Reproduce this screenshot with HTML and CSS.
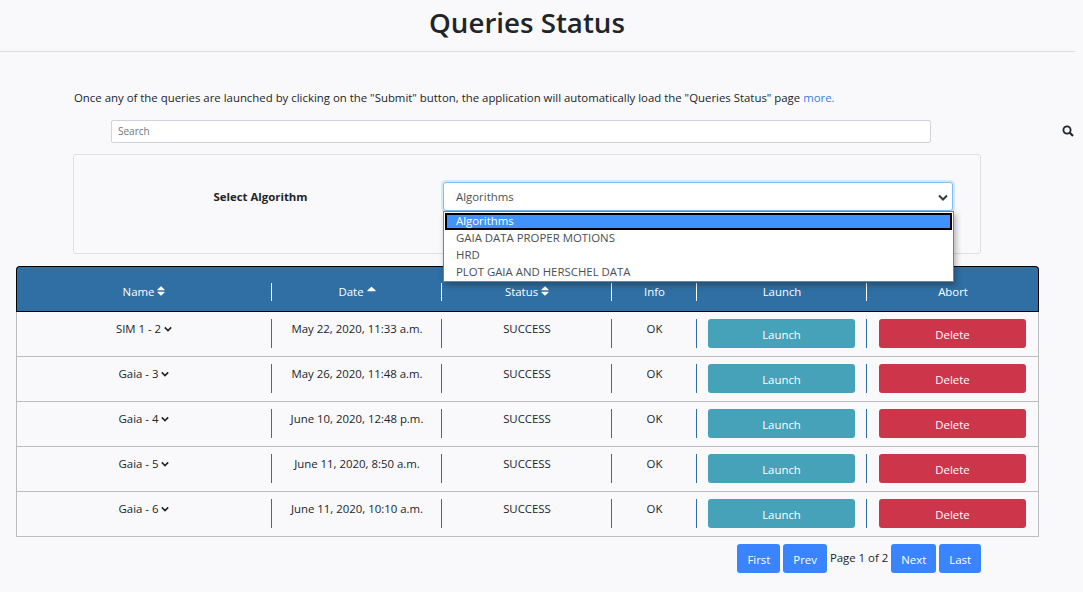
FILE: index.html
```html
<!DOCTYPE html>
<html lang="en">
<head>
  <meta charset="UTF-8" />
  <title>Queries Status</title>
  <link rel="stylesheet" href="styles.css">
</head>
<body>
  <svg width="0" height="0" class="defs">
    <symbol id="sort" viewBox="0 0 10 12"><path d="M1 5h8a.6.6 0 0 0 .4-1L5.4.3a.6.6 0 0 0-.8 0L.6 4A.6.6 0 0 0 1 5zM9 7H1a.6.6 0 0 0-.4 1l4 3.7c.2.2.6.2.8 0l4-3.7A.6.6 0 0 0 9 7z"/></symbol>
    <symbol id="sort-up" viewBox="0 0 10 6"><path d="M1 5.500h8a.6.6 0 0 0 .4-1L5.400.7a.6.6 0 0 0-.8 0L.6 4.500a.6.6 0 0 0 .4 1z"/></symbol>
    <symbol id="chev" viewBox="0 0 10 7"><path d="M1 1.500 5 5.500l4-4" fill="none" stroke="currentColor" stroke-width="2"/></symbol>
  </svg>

  <header class="page-head"><h1>Queries Status</h1></header>

  <p class="intro">Once any of the queries are launched by clicking on the "Submit" button, the application will automatically load the "Queries Status" page <a href="#">more.</a></p>

  <div class="search-row">
    <input type="text" class="search" placeholder="Search">
    <svg class="search-icon" viewBox="0 0 12 12" width="12" height="12"><circle cx="5" cy="5" r="3.600" fill="none" stroke="currentColor" stroke-width="1.800"/><path d="M7.800 7.800 11 11" stroke="currentColor" stroke-width="2.200"/></svg>
  </div>

  <section class="algo-panel">
    <label class="algo-label">Select Algorithm</label>
    <div class="algo-select">
      <div class="select-box">Algorithms
        <svg class="select-chev" width="10" height="7"><use href="#chev"/></svg>
      </div>
      <ul class="select-list">
        <li class="selected">Algorithms</li>
        <li>GAIA DATA PROPER MOTIONS</li>
        <li>HRD</li>
        <li>PLOT GAIA AND HERSCHEL DATA</li>
      </ul>
    </div>
  </section>

  <table class="queries">
    <colgroup>
      <col class="c-name"><col class="c-date"><col class="c-status"><col class="c-info"><col class="c-launch"><col class="c-abort">
    </colgroup>
    <thead>
      <tr>
        <th><div>Name <svg class="ic-sort"><use href="#sort"/></svg></div></th>
        <th><div>Date <svg class="ic-up"><use href="#sort-up"/></svg></div></th>
        <th><div>Status <svg class="ic-sort"><use href="#sort"/></svg></div></th>
        <th><div>Info</div></th>
        <th><div>Launch</div></th>
        <th><div>Abort</div></th>
      </tr>
    </thead>
    <tbody>
      <tr>
        <td><div>SIM 1 - 2 <svg class="ic-chev"><use href="#chev"/></svg></div></td>
        <td><div>May 22, 2020, 11:33 a.m.</div></td>
        <td><div>SUCCESS</div></td>
        <td><div>OK</div></td>
        <td><div class="btn-cell"><button class="btn teal">Launch</button></div></td>
        <td><div class="btn-cell"><button class="btn red">Delete</button></div></td>
      </tr>
      <tr>
        <td><div>Gaia - 3 <svg class="ic-chev"><use href="#chev"/></svg></div></td>
        <td><div>May 26, 2020, 11:48 a.m.</div></td>
        <td><div>SUCCESS</div></td>
        <td><div>OK</div></td>
        <td><div class="btn-cell"><button class="btn teal">Launch</button></div></td>
        <td><div class="btn-cell"><button class="btn red">Delete</button></div></td>
      </tr>
      <tr>
        <td><div>Gaia - 4 <svg class="ic-chev"><use href="#chev"/></svg></div></td>
        <td><div>June 10, 2020, 12:48 p.m.</div></td>
        <td><div>SUCCESS</div></td>
        <td><div>OK</div></td>
        <td><div class="btn-cell"><button class="btn teal">Launch</button></div></td>
        <td><div class="btn-cell"><button class="btn red">Delete</button></div></td>
      </tr>
      <tr>
        <td><div>Gaia - 5 <svg class="ic-chev"><use href="#chev"/></svg></div></td>
        <td><div>June 11, 2020, 8:50 a.m.</div></td>
        <td><div>SUCCESS</div></td>
        <td><div>OK</div></td>
        <td><div class="btn-cell"><button class="btn teal">Launch</button></div></td>
        <td><div class="btn-cell"><button class="btn red">Delete</button></div></td>
      </tr>
      <tr>
        <td><div>Gaia - 6 <svg class="ic-chev"><use href="#chev"/></svg></div></td>
        <td><div>June 11, 2020, 10:10 a.m.</div></td>
        <td><div>SUCCESS</div></td>
        <td><div>OK</div></td>
        <td><div class="btn-cell"><button class="btn teal">Launch</button></div></td>
        <td><div class="btn-cell"><button class="btn red">Delete</button></div></td>
      </tr>
    </tbody>
  </table>

  <nav class="pager">
    <button class="btn blue">First</button>
    <button class="btn blue">Prev</button>
    <span class="pager-text">Page 1 of 2</span>
    <button class="btn blue">Next</button>
    <button class="btn blue">Last</button>
  </nav>
</body>
</html>
```

FILE: styles.css
```css
* {
  box-sizing: border-box;
}
html, body {
  height: 100%;
}
body {
  margin: 0;
  background: #f9f9fb;
  color: #212529;
  font-family: "Open Sans", sans-serif;
  font-size: 11.4px;
  overflow: hidden;
}
.defs {
  position: absolute;
}
.page-head {
  width: 1075px;
  height: 52px;
  border-bottom: 1px solid #dcdcdf;
  text-align: center;
}
.page-head h1 {
  margin: 0;
  padding-right: 21px;
  font-size: 27.7px;
  font-weight: 600;
  line-height: 44px;
}
.intro {
  margin: 37px 0 0 74px;
  line-height: 17px;
}
.intro a {
  color: #3a7cd8;
  text-decoration: none;
}
.search-row {
  display: flex;
  align-items: flex-start;
  margin: 14px 0 0 111px;
}
.search {
  width: 820px;
  height: 23px;
  padding: 0 6px 2px;
  border: 1px solid #ced4da;
  border-radius: 2px;
  background: #fff;
  font: 10px "Open Sans", sans-serif;
}
.search::placeholder {
  color: #6c757d;
}
.search-icon {
  margin: 5px 0 0 131px;
  color: #212529;
}
.algo-panel {
  display: flex;
  width: 908px;
  height: 100px;
  margin: 11px 0 0 73px;
  padding-top: 27px;
  border: 1px solid #e0e0e3;
  border-radius: 3px;
}
.algo-label {
  width: 369px;
  padding-left: 4px;
  font-weight: 700;
  line-height: 30px;
  text-align: center;
}
.algo-select {
  position: relative;
  width: 510px;
}
.select-box {
  position: relative;
  height: 29px;
  padding-left: 12px;
  border: 1px solid #80bdff;
  border-radius: 3px;
  background: #fff;
  box-shadow: 0 0 0 2px rgba(128, 189, 255, .3);
  color: #495057;
  line-height: 28px;
}
.select-chev {
  position: absolute;
  top: 11px;
  right: 4px;
  color: #343a40;
}
.select-list {
  position: absolute;
  top: 29px;
  left: 0;
  z-index: 5;
  width: 511px;
  margin: 0;
  padding: 1px 1px 0;
  border: 1px solid #808080;
  background: #fff;
  box-shadow: 2px 3px 6px rgba(0, 0, 0, .3);
  color: #495057;
  list-style: none;
}
.select-list li {
  height: 17px;
  padding-left: 11px;
  line-height: 15px;
}
.select-list .selected {
  outline: 2px solid #000;
  outline-offset: -2px;
  background: #3f92ff;
  color: #fff;
}
.queries {
  width: 1023px;
  margin: 12px 0 0 16px;
  border-collapse: separate;
  border-spacing: 0;
  table-layout: fixed;
}
.c-name { width: 255px; }
.c-date { width: 170px; }
.c-status { width: 170px; }
.c-info { width: 85px; }
.c-launch { width: 170px; }
.c-abort { width: 173px; }
.queries th {
  height: 46px;
  padding: 5px 0 0;
  border-top: 1px solid #000;
  border-bottom: 1px solid #000;
  background: #2f6fa3;
  color: #fff;
  font-weight: 400;
}
.queries th:first-child {
  border-left: 1px solid #000;
  border-top-left-radius: 4px;
}
.queries th:last-child {
  border-right: 1px solid #000;
  border-top-right-radius: 4px;
}
.queries th div {
  height: 18px;
  padding-left: 1px;
  border-left: 1px solid #fff;
  line-height: 18px;
}
.queries td {
  height: 45px;
  padding: 7px 0 0;
  border-bottom: 1px solid #bdbdc0;
  vertical-align: top;
  text-align: center;
}
.queries td:first-child {
  border-left: 1px solid #bdbdc0;
}
.queries td:last-child {
  border-right: 1px solid #bdbdc0;
}
.queries td div {
  height: 29px;
  padding-left: 1px;
  border-left: 1px solid #2f6fa3;
  line-height: 19px;
}
.queries th:first-child div,
.queries td:first-child div {
  padding-left: 0;
  border-left: 0;
}
.queries td .btn-cell {
  padding-left: 11px;
  text-align: left;
}
.queries td:last-child .btn-cell {
  padding-left: 12px;
}
.ic-sort {
  width: 8px;
  height: 10px;
  fill: #fff;
}
.ic-up {
  width: 9px;
  height: 6px;
  margin-bottom: 4px;
  fill: #fff;
}
.ic-chev {
  width: 8px;
  height: 6px;
  margin-bottom: 1px;
  color: #212529;
}
.btn {
  height: 29px;
  padding: 1px 0 0;
  border: 0;
  border-radius: 3px;
  color: #fff;
  font: 11.4px "Open Sans", sans-serif;
}
.teal {
  width: 147px;
  background: #45a2b8;
}
.red {
  width: 147px;
  background: #cd354b;
}
.blue {
  padding: 1px 10px 0;
  background: #3a84ff;
}
.pager {
  display: flex;
  align-items: flex-start;
  justify-content: flex-end;
  width: 981px;
  margin-top: 7px;
  gap: 3px;
}
.pager-text {
  line-height: 28px;
}
```
